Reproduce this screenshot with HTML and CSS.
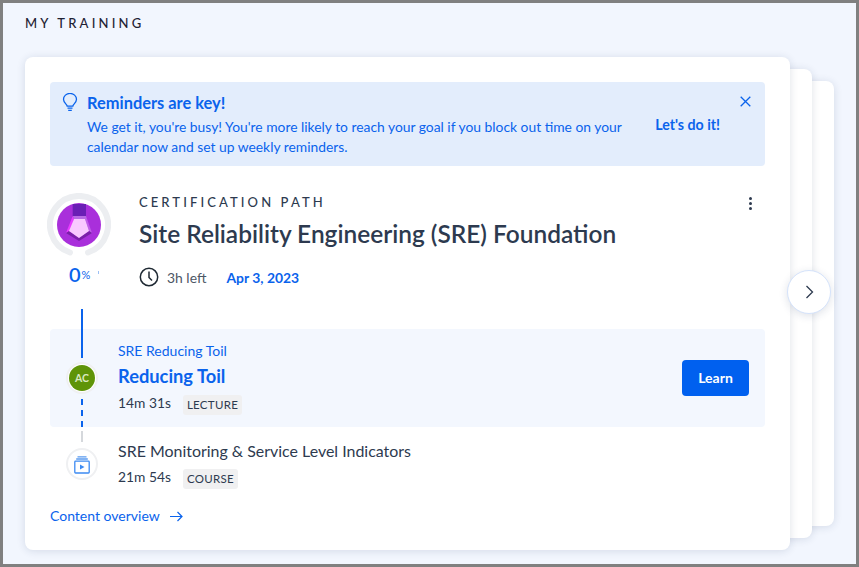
FILE: index.html
```html
<!DOCTYPE html>
<html lang="en">
<head>
    <meta charset="UTF-8">
    <title>My Training</title>
    <link rel="stylesheet" href="styles.css">
</head>
<body>
    <div class="frame">
        <h2 class="page-title">MY TRAINING</h2>

        <div class="deck">
            <div class="card">
                <!-- Reminder banner -->
                <div class="banner">
                    <svg class="banner-icon" width="16" height="19" viewBox="0 0 16 19" fill="none" stroke="#0a63ec" stroke-width="1.3">
                        <path d="M5.2 13.2c0-2-3.7-3.2-3.7-6.9a6.3 5.7 0 0 1 13 0c0 3.700-3.700 4.900-3.700 6.900z"/>
                        <path d="M5.500 15.200h5M6.200 17.300h3.600"/>
                    </svg>
                    <div class="banner-text">
                        <div class="banner-title">Reminders are key!</div>
                        <p>We get it, you're busy! You're more likely to reach your goal if you block out time on your calendar now and set up weekly reminders.</p>
                    </div>
                    <a class="banner-action">Let's do it!</a>
                    <svg class="banner-close" width="11" height="11" viewBox="0 0 11 11" fill="none" stroke="#0a63ec" stroke-width="1.3">
                        <path d="M.7.700l9.600 9.600M10.300.700L.7 10.300"/>
                    </svg>
                </div>

                <!-- Path header -->
                <div class="path-header">
                    <div class="progress">
                        <div class="ring">
                            <svg class="ring-track" width="64" height="64" viewBox="0 0 64 64" fill="none">
                                <path d="M23 59.500A29 29 0 1 1 41 59.500" stroke="#eceef1" stroke-width="6" stroke-linecap="round"/>
                            </svg>
                            <svg class="gem" width="44" height="44" viewBox="0 0 44 44">
                                <circle cx="22" cy="22" r="22" fill="#a92fdb"/>
                                <path d="M15.700 1h13.300v13H15.700z" fill="#6a1fb5"/>
                                <path d="M15.700 13L9 30l4 -2 4 -12z" fill="#e83cff"/>
                                <path d="M29 13l6 17-3 -2-4-12z" fill="#c060e8"/>
                                <path d="M9 30l13 8 13-8-3-2-10 7-10-7z" fill="#7a20a8"/>
                                <path d="M15.700 13H29v3H17z" fill="#b86be6"/>
                                <path d="M17 16h11l4 12-10 7-10-7z" fill="#f9c9ff"/>
                            </svg>
                        </div>
                        <div class="percent"><b>0</b><span>%</span><i></i></div>
                    </div>
                    <div class="path-info">
                        <div class="path-label">CERTIFICATION PATH</div>
                        <h1>Site Reliability Engineering (SRE) Foundation</h1>
                        <div class="path-meta">
                            <svg width="20" height="20" viewBox="0 0 20 20" fill="none" stroke="#1f2933" stroke-width="1.500">
                                <circle cx="10" cy="10" r="8.700"/>
                                <path d="M10 4.500V10.500l3 3"/>
                            </svg>
                            <span class="time-left">3h left</span>
                            <span class="due">Apr 3, 2023</span>
                        </div>
                    </div>
                    <div class="more"><i></i><i></i><i></i></div>
                </div>

                <!-- Timeline -->
                <div class="step step-current">
                    <div class="marker"><div class="avatar">AC</div></div>
                    <div class="step-body">
                        <div class="step-parent">SRE Reducing Toil</div>
                        <div class="step-title">Reducing Toil</div>
                        <div class="step-meta">14m 31s <span class="tag">LECTURE</span></div>
                    </div>
                    <button class="learn">Learn</button>
                </div>

                <div class="step step-next">
                    <div class="marker">
                        <svg width="16" height="18" viewBox="0 0 16 18" fill="none" stroke="#5b9bf0" stroke-width="1.300">
                            <path d="M3.500 .8h9M2.200 3h11.600"/>
                            <rect x=".8" y="5.200" width="14.400" height="11.800" rx=".8" stroke="#3d8bf2"/>
                            <path d="M6 8.500v5l4.500-2.500z" fill="#3d8bf2" stroke="none"/>
                        </svg>
                    </div>
                    <div class="step-body">
                        <div class="step-name">SRE Monitoring &amp; Service Level Indicators</div>
                        <div class="step-meta">21m 54s <span class="tag">COURSE</span></div>
                    </div>
                </div>

                <a class="overview">Content overview
                    <svg width="13" height="11" viewBox="0 0 13 11" fill="none" stroke="#0a63ec" stroke-width="1.200">
                        <path d="M0 5.500h12M7.500 1l4.500 4.500L7.500 10"/>
                    </svg>
                </a>
            </div>
            <button class="next">
                <svg width="9" height="14" viewBox="0 0 9 14" fill="none" stroke="#2d3a4f" stroke-width="1.300">
                    <path d="M1.500 1l6 6-6 6"/>
                </svg>
            </button>
        </div>
    </div>
</body>
</html>
```

FILE: styles.css
```css
* {
    box-sizing: border-box;
}

body {
    margin: 0;
    font-family: "Lato", sans-serif;
}

.frame {
    width: 859px;
    height: 567px;
    border: 3px solid #808080;
    background: #f2f6fe;
    padding: 12px 22px 0;
    overflow: hidden;
}

.page-title {
    margin: 0 0 26px;
    height: 16px;
    font-size: 13px;
    line-height: 16px;
    font-weight: 500;
    letter-spacing: 3.2px;
    color: #1f2233;
}

/* Card stack */
.deck {
    position: relative;
    width: 765px;
    height: 493px;
}

.deck::before,
.deck::after {
    content: '';
    position: absolute;
    background: #fff;
    border-radius: 8px;
    box-shadow: 0 1px 8px rgba(30, 50, 90, 0.14);
}

.deck::before {
    top: 12px;
    bottom: 12px;
    left: 40px;
    right: -22px;
    z-index: 1;
}

.deck::after {
    top: 24px;
    bottom: 24px;
    left: 60px;
    right: -44px;
}

.card {
    position: relative;
    z-index: 2;
    height: 100%;
    background: #fff;
    border-radius: 8px;
    padding: 25px 25px 0;
    box-shadow: 0 1px 8px rgba(30, 50, 90, 0.14);
}

.next {
    position: absolute;
    z-index: 3;
    top: 213px;
    right: -41px;
    width: 44px;
    height: 44px;
    padding: 0;
    border: 1px solid #d5e3fb;
    border-radius: 50%;
    background: #fff;
    box-shadow: 0 2px 8px rgba(30, 50, 90, 0.14);
    display: flex;
    align-items: center;
    justify-content: center;
}

/* Banner */
.banner {
    position: relative;
    display: flex;
    height: 84px;
    padding: 11px 45px 0 12px;
    background: #e3edfc;
    border-radius: 4px;
    color: #0a63ec;
}

.banner-icon {
    flex: none;
    margin-right: 9px;
}

.banner-text {
    width: 548px;
}

.banner-title {
    font-size: 16.4px;
    line-height: 20px;
    font-weight: 700;
}

.banner-text p {
    margin: 4px 0 0;
    font-size: 13.85px;
    line-height: 20px;
}

.banner-action {
    margin: 22px 0 0 auto;
    font-size: 14.2px;
    line-height: 20px;
    font-weight: 700;
}

.banner-close {
    position: absolute;
    top: 14px;
    right: 14px;
}

/* Path header */
.path-header {
    position: relative;
    display: flex;
    height: 136px;
    margin: 27px 0 0 -3px;
}

.progress {
    flex: none;
    width: 64px;
    margin-right: 28px;
}

.ring {
    position: relative;
    width: 64px;
    height: 64px;
}

.ring-track {
    display: block;
}

.gem {
    position: absolute;
    top: 10px;
    left: 10px;
}

.percent {
    display: flex;
    align-items: center;
    height: 22px;
    margin-top: 6px;
    padding-left: 22px;
    color: #0a63ec;
}

.percent b {
    font-size: 20px;
    font-weight: 600;
}

.percent span {
    margin-left: 1px;
    font-size: 11px;
}

.percent i {
    width: 1px;
    height: 3px;
    margin: -4px 0 0 8px;
    background: #9cc0f5;
}

.path-label {
    font-size: 13px;
    line-height: 18px;
    font-weight: 500;
    letter-spacing: 3.1px;
    color: #2d3a4f;
}

.path-info h1 {
    margin: 6px 0 0;
    font-size: 24.45px;
    line-height: 34px;
    font-weight: 600;
    color: #2d3a4f;
}

.path-meta {
    display: flex;
    align-items: center;
    margin-top: 16px;
    height: 20px;
    font-size: 13.9px;
}

.time-left {
    margin-left: 8px;
    color: #4d5766;
}

.due {
    margin-left: 20px;
    color: #0a63ec;
    font-weight: 700;
}

.more {
    position: absolute;
    top: 4px;
    right: 13px;
    display: flex;
    flex-direction: column;
    gap: 2px;
}

.more i {
    width: 3px;
    height: 3px;
    border-radius: 50%;
    background: #2d3a4f;
}

/* Timeline */
.step {
    position: relative;
    display: flex;
    align-items: center;
}

.step-current {
    height: 98px;
    padding-right: 16px;
    background: #f3f7fe;
    border-radius: 4px;
}

.step-next {
    height: 75px;
}

.marker {
    flex: none;
    width: 32px;
    height: 32px;
    margin: 0 20px 0 16px;
    border: 2px solid #eff0f2;
    border-radius: 50%;
    background: #fff;
    display: flex;
    align-items: center;
    justify-content: center;
}

.step-next .marker {
    margin-top: -1px;
    padding-top: 1px;
}

/* solid line above the current step, dashes down to the next one */
.step-current::before {
    content: '';
    position: absolute;
    top: -20px;
    left: 31px;
    width: 2px;
    height: 49px;
    background: #0a63ec;
}

.step-current::after {
    content: '';
    position: absolute;
    top: 70px;
    left: 31px;
    width: 2px;
    height: 28px;
    background: repeating-linear-gradient(to bottom, #0a63ec 0 6px, transparent 6px 11px);
}

.step-next::before {
    content: '';
    position: absolute;
    top: 4px;
    left: 31px;
    width: 2px;
    height: 11px;
    background: #d5d8dc;
}

.avatar {
    width: 26px;
    height: 26px;
    border-radius: 50%;
    background: #5f9408;
    color: #d9e8c0;
    font-size: 10.5px;
    font-weight: 700;
    line-height: 26px;
    text-align: center;
}

.step-body {
    flex: 1;
    color: #2d3a4f;
}

.step-current .step-body {
    margin-top: -1px;
}

.step-next .step-body {
    margin-top: -2px;
}

.step-parent {
    font-size: 14px;
    line-height: 16px;
    color: #0a63ec;
}

.step-title {
    margin-top: 4px;
    font-size: 18.3px;
    line-height: 26px;
    font-weight: 700;
    color: #0a63ec;
}

.step-name {
    font-size: 15.95px;
    line-height: 22px;
}

.step-meta {
    display: flex;
    align-items: flex-start;
    gap: 12px;
    height: 20px;
    margin-top: 5px;
    font-size: 13.8px;
    line-height: 20px;
}

.step-current .step-meta {
    margin-top: 4px;
}

.tag {
    margin-top: 2px;
    padding: 0 4px;
    background: #f0f0f1;
    border-radius: 3px;
    font-size: 11.5px;
    line-height: 20px;
    letter-spacing: 0.3px;
}

.learn {
    flex: none;
    width: 67px;
    height: 36px;
    padding: 0 0 2px;
    border: none;
    border-radius: 4px;
    background: #0060ef;
    color: #fff;
    font-family: inherit;
    font-size: 14px;
    font-weight: 700;
}

.overview {
    display: flex;
    align-items: center;
    gap: 10px;
    margin-top: 4px;
    font-size: 14px;
    line-height: 20px;
    color: #0a63ec;
}
```
